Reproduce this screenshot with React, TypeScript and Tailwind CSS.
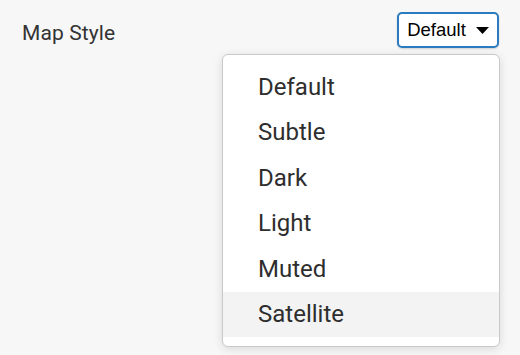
import React from "react";

const items = ["Default", "Subtle", "Dark", "Light", "Muted", "Satellite"];

export default function App() {
  return (
    <div className="w-[520px] h-[355px] bg-[#f7f7f7] overflow-hidden relative" style={{ fontFamily: "Roboto, sans-serif" }}>
      <div className="flex items-start justify-between pl-[22px] pr-[21px] pt-[12px]">
        <div className="pt-[3px] text-[21px] leading-[36px] text-[#333333] tracking-[0.1px]">Map Style</div>
        <button
          className="h-[36px] w-[102px] rounded-[5px] border-2 border-[#2b7bc1] bg-white flex items-center justify-center gap-[10px] text-[18.5px] text-black shadow-[0_1px_2px_rgba(0,0,0,0.15)]"
          style={{ fontFamily: '"Liberation Sans", Arial, sans-serif' }}
        >
          <span>Default</span>
          <svg width="13" height="7" viewBox="0 0 13 7">
            <path d="M0 0 L13 0 L6.5 7 Z" fill="#000" />
          </svg>
        </button>
      </div>
      <div className="absolute left-[222px] top-[54px] w-[278px] rounded-[6px] border border-[#c9c9c9] bg-white py-[9px] shadow-[0_2px_10px_rgba(0,0,0,0.12)]">
        {items.map((it) => (
          <div
            key={it}
            className={`h-[45.5px] flex items-center pl-[35px] text-[24px] text-[#2e2e2e] ${it === "Satellite" ? "bg-[#f3f3f3]" : ""}`}
          >
            {it}
          </div>
        ))}
      </div>
    </div>
  );
}
